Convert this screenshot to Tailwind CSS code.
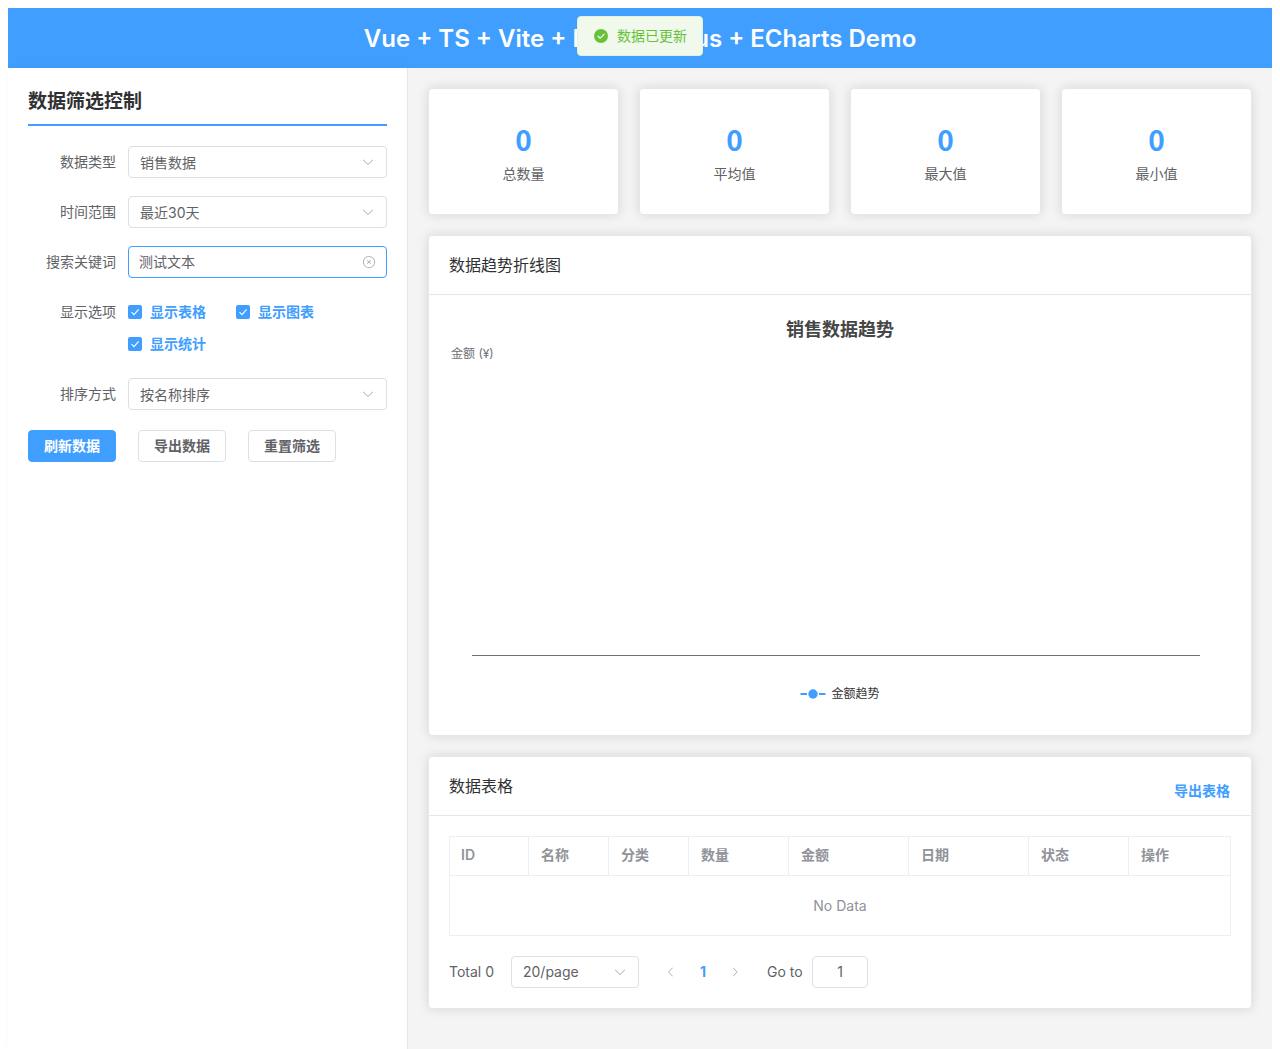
<!DOCTYPE html>
<html lang="zh-CN">
<head>
<meta charset="UTF-8">
<meta name="viewport" content="width=device-width, initial-scale=1">
<title>Vue + TS + Vite + Element Plus + ECharts Demo</title>
<script src="https://cdn.jsdelivr.net/npm/@tailwindcss/browser@4"></script>
</head>
<body class="flex min-h-screen flex-col bg-white px-2 pt-2 font-['Inter','Noto_Sans_CJK_SC',sans-serif] text-sm text-[#606266]">
<svg class="hidden" aria-hidden="true">
  <symbol id="arrow-down" viewBox="0 0 1024 1024"><path d="M831.872 340.864 512 652.672 192.128 340.864a30.592 30.592 0 0 0-42.752 0 29.12 29.12 0 0 0 0 41.6L489.664 714.24a32 32 0 0 0 44.672 0l340.288-331.712a29.12 29.12 0 0 0 0-41.728 30.592 30.592 0 0 0-42.752 0z"/></symbol>
  <symbol id="check" viewBox="0 0 14 14"><path d="M3.5 7.2 6 9.7 10.6 4.3" fill="none" stroke="currentColor" stroke-width="1.1"/></symbol>
</svg>

<div role="status" class="fixed top-4 left-1/2 z-10 flex h-10 -translate-x-1/2 items-center gap-2 rounded border border-[#e1f3d8] bg-[#f0f9eb] px-[15px] whitespace-nowrap text-[#67c23a]">
  <svg class="size-4" viewBox="0 0 1024 1024" fill="currentColor"><path d="M512 64a448 448 0 1 1 0 896 448 448 0 0 1 0-896m-55.808 536.384-99.52-99.584a38.4 38.4 0 1 0-54.336 54.336l126.72 126.72a38.272 38.272 0 0 0 54.336 0l262.4-262.464a38.4 38.4 0 1 0-54.272-54.336z"/></svg>
  <p>数据已更新</p>
</div>

<header class="flex h-[60px] items-center justify-center bg-[#409eff] px-5 pt-[2px]">
  <h1 class="text-2xl font-semibold text-white">Vue + TS + Vite + Element Plus + ECharts Demo</h1>
</header>

<div class="flex flex-1">
  <aside class="w-[400px] shrink-0 border-r border-[#e4e7ed] bg-white p-5 shadow-[2px_0_8px_rgba(0,0,0,0.04)]">
    <h2 class="border-b-2 border-[#409eff] pb-2 text-[19px] leading-7 font-bold text-[#303133]">数据筛选控制</h2>
    <form class="mt-5">
      <div class="grid grid-cols-[88px_1fr] gap-x-3 gap-y-[18px] leading-8">
        <label for="type" class="text-right">数据类型</label>
        <div class="relative">
          <select id="type" class="block h-8 w-full appearance-none rounded border border-[#dcdfe6] bg-white pr-8 pb-[2px] pl-[11px]"><option>销售数据</option></select>
          <svg class="pointer-events-none absolute top-[9px] right-3 size-[14px] fill-[#a8abb2]"><use href="#arrow-down"/></svg>
        </div>
        <label for="range" class="text-right">时间范围</label>
        <div class="relative">
          <select id="range" class="block h-8 w-full appearance-none rounded border border-[#dcdfe6] bg-white pr-8 pb-[2px] pl-[11px]"><option>最近30天</option></select>
          <svg class="pointer-events-none absolute top-[9px] right-3 size-[14px] fill-[#a8abb2]"><use href="#arrow-down"/></svg>
        </div>
        <label for="keyword" class="text-right">搜索关键词</label>
        <div class="relative">
          <input id="keyword" type="text" value="测试文本" class="block h-8 w-full rounded border border-[#409eff] bg-white pr-8 pl-[10px] outline-none">
          <button type="button" aria-label="清空" class="absolute top-[9px] right-[11px] size-[14px]">
            <svg class="size-[14px] fill-[#a8abb2]" viewBox="0 0 1024 1024"><path d="m466.752 512-90.496-90.496a32 32 0 0 1 45.248-45.248L512 466.752l90.496-90.496a32 32 0 0 1 45.248 45.248L557.248 512l90.496 90.496a32 32 0 1 1-45.248 45.248L512 557.248l-90.496 90.496a32 32 0 0 1-45.248-45.248z"/><path d="M512 896a384 384 0 1 0 0-768 384 384 0 0 0 0 768m0 64a448 448 0 1 1 0-896 448 448 0 0 1 0 896"/></svg>
          </button>
        </div>
        <span id="options" class="text-right">显示选项</span>
        <div role="group" aria-labelledby="options" class="flex flex-wrap gap-x-[30px] font-bold text-[#409eff]">
          <label class="flex h-8 items-center gap-2"><span class="relative flex"><input type="checkbox" checked class="size-[14px] appearance-none rounded-xs bg-[#409eff]"><svg class="pointer-events-none absolute inset-0 size-[14px] text-white"><use href="#check"/></svg></span>显示表格</label>
          <label class="flex h-8 items-center gap-2"><span class="relative flex"><input type="checkbox" checked class="size-[14px] appearance-none rounded-xs bg-[#409eff]"><svg class="pointer-events-none absolute inset-0 size-[14px] text-white"><use href="#check"/></svg></span>显示图表</label>
          <label class="flex h-8 items-center gap-2"><span class="relative flex"><input type="checkbox" checked class="size-[14px] appearance-none rounded-xs bg-[#409eff]"><svg class="pointer-events-none absolute inset-0 size-[14px] text-white"><use href="#check"/></svg></span>显示统计</label>
        </div>
        <label for="sort" class="text-right">排序方式</label>
        <div class="relative">
          <select id="sort" class="block h-8 w-full appearance-none rounded border border-[#dcdfe6] bg-white pr-8 pb-[2px] pl-[11px]"><option>按名称排序</option></select>
          <svg class="pointer-events-none absolute top-[9px] right-3 size-[14px] fill-[#a8abb2]"><use href="#arrow-down"/></svg>
        </div>
      </div>
      <div class="mt-5 flex gap-[22px] font-bold">
        <button type="button" class="h-8 rounded border border-[#409eff] bg-[#409eff] px-[15px] text-white">刷新数据</button>
        <button type="button" class="h-8 rounded border border-[#dcdfe6] bg-white px-[15px]">导出数据</button>
        <button type="button" class="h-8 rounded border border-[#dcdfe6] bg-white px-[15px]">重置筛选</button>
      </div>
    </form>
  </aside>

  <main class="flex min-w-0 flex-1 flex-col gap-5 bg-[#f4f4f4] p-5">
    <section class="grid grid-cols-4 gap-5 text-center">
      <div class="flex flex-col gap-[7px] rounded border border-[#e4e7ed] bg-white px-5 pt-8 pb-[30px] shadow-[0_0_12px_rgba(0,0,0,0.12)]"><strong class="font-['Noto_Sans_CJK_SC',sans-serif] text-[28px] leading-9 font-bold text-[#409eff]">0</strong><span class="leading-5">总数量</span></div>
      <div class="flex flex-col gap-[7px] rounded border border-[#e4e7ed] bg-white px-5 pt-8 pb-[30px] shadow-[0_0_12px_rgba(0,0,0,0.12)]"><strong class="font-['Noto_Sans_CJK_SC',sans-serif] text-[28px] leading-9 font-bold text-[#409eff]">0</strong><span class="leading-5">平均值</span></div>
      <div class="flex flex-col gap-[7px] rounded border border-[#e4e7ed] bg-white px-5 pt-8 pb-[30px] shadow-[0_0_12px_rgba(0,0,0,0.12)]"><strong class="font-['Noto_Sans_CJK_SC',sans-serif] text-[28px] leading-9 font-bold text-[#409eff]">0</strong><span class="leading-5">最大值</span></div>
      <div class="flex flex-col gap-[7px] rounded border border-[#e4e7ed] bg-white px-5 pt-8 pb-[30px] shadow-[0_0_12px_rgba(0,0,0,0.12)]"><strong class="font-['Noto_Sans_CJK_SC',sans-serif] text-[28px] leading-9 font-bold text-[#409eff]">0</strong><span class="leading-5">最小值</span></div>
    </section>

    <section class="rounded border border-[#e4e7ed] bg-white shadow-[0_0_12px_rgba(0,0,0,0.12)]">
      <h2 class="border-b border-[#e4e7ed] px-5 py-[18px] text-base leading-[22px] text-[#303133]">数据趋势折线图</h2>
      <div class="p-5">
        <div class="flex h-[400px] flex-col">
          <h3 class="text-center text-lg leading-[30px] font-bold text-[#464646]">销售数据趋势</h3>
          <p class="px-[2px] text-xs leading-[18px] text-[#6e7079]">金额 (¥)</p>
          <div class="mr-[31px] ml-[23px] flex-1 border-b border-[#6e7079]"></div>
          <div class="flex items-center justify-center gap-[5px] pt-7 pb-[11px] text-xs leading-5 text-[#333]">
            <svg class="h-[14px] w-[26px]" viewBox="0 0 26 14"><path d="M0.5 7h6.5M19 7h6.5" stroke="#409eff" stroke-width="2"/><circle cx="13" cy="7" r="4.7" fill="#409eff"/></svg>
            <span>金额趋势</span>
          </div>
        </div>
      </div>
    </section>

    <section class="rounded border border-[#e4e7ed] bg-white shadow-[0_0_12px_rgba(0,0,0,0.12)]">
      <div class="flex h-[59px] items-start justify-between border-b border-[#e4e7ed] px-5 pt-[18px]">
        <h2 class="text-base leading-[22px] text-[#303133]">数据表格</h2>
        <button type="button" class="h-8 px-px font-bold text-[#409eff]">导出表格</button>
      </div>
      <div class="p-5">
        <table class="w-full table-fixed border-separate border-spacing-0 border-t border-l border-[#ebeef5] text-left text-[#909399]">
          <colgroup><col class="w-[79px]"><col class="w-20"><col class="w-20"><col class="w-[100px]"><col class="w-[120px]"><col class="w-[120px]"><col class="w-[100px]"><col></colgroup>
          <thead>
            <tr class="h-[39px]">
              <th class="border-r border-b border-[#ebeef5] px-[11px] pb-[2px] font-semibold">ID</th>
              <th class="border-r border-b border-[#ebeef5] px-3 pb-[2px] font-bold">名称</th>
              <th class="border-r border-b border-[#ebeef5] px-3 pb-[2px] font-bold">分类</th>
              <th class="border-r border-b border-[#ebeef5] px-3 pb-[2px] font-bold">数量</th>
              <th class="border-r border-b border-[#ebeef5] px-3 pb-[2px] font-bold">金额</th>
              <th class="border-r border-b border-[#ebeef5] px-3 pb-[2px] font-bold">日期</th>
              <th class="border-r border-b border-[#ebeef5] px-3 pb-[2px] font-bold">状态</th>
              <th class="border-r border-b border-[#ebeef5] px-3 pb-[2px] font-bold">操作</th>
            </tr>
          </thead>
          <tbody><tr class="h-[60px]"><td colspan="8" class="border-r border-b border-[#ebeef5] text-center">No Data</td></tr></tbody>
        </table>
        <nav aria-label="分页" class="mt-5 flex items-center gap-4">
          <span class="min-w-[46px]">Total 0</span>
          <div class="relative w-32">
            <select aria-label="每页条数" class="block h-8 w-full appearance-none rounded border border-[#dcdfe6] bg-white pr-8 pl-[11px]"><option>20/page</option></select>
            <svg class="pointer-events-none absolute top-[9px] right-3 size-[14px] fill-[#a8abb2]"><use href="#arrow-down"/></svg>
          </div>
          <div class="flex">
            <button type="button" disabled aria-label="上一页" class="flex size-8 items-center justify-center"><svg class="size-3 fill-[#a8abb2]" viewBox="0 0 1024 1024"><path d="M609.408 149.376 277.76 489.6a32 32 0 0 0 0 44.672l331.648 340.352a29.12 29.12 0 0 0 41.728 0 30.592 30.592 0 0 0 0-42.752L339.264 511.936l311.872-319.872a30.592 30.592 0 0 0 0-42.688 29.12 29.12 0 0 0-41.728 0z"/></svg></button>
            <button type="button" aria-current="page" class="size-8 font-bold text-[#409eff]">1</button>
            <button type="button" disabled aria-label="下一页" class="flex size-8 items-center justify-center"><svg class="size-3 fill-[#a8abb2]" viewBox="0 0 1024 1024"><path d="M340.864 149.312a30.592 30.592 0 0 0 0 42.752L652.736 512 340.864 831.872a30.592 30.592 0 0 0 0 42.752 29.12 29.12 0 0 0 41.728 0L714.24 534.336a32 32 0 0 0 0-44.672L382.592 149.376a29.12 29.12 0 0 0-41.728 0z"/></svg></button>
          </div>
          <label class="flex items-center gap-2"><span class="min-w-[37px]">Go to</span><input type="text" value="1" class="h-8 w-14 rounded border border-[#dcdfe6] bg-white pb-[2px] text-center"></label>
        </nav>
      </div>
    </section>
  </main>
</div>
</body>
</html>
